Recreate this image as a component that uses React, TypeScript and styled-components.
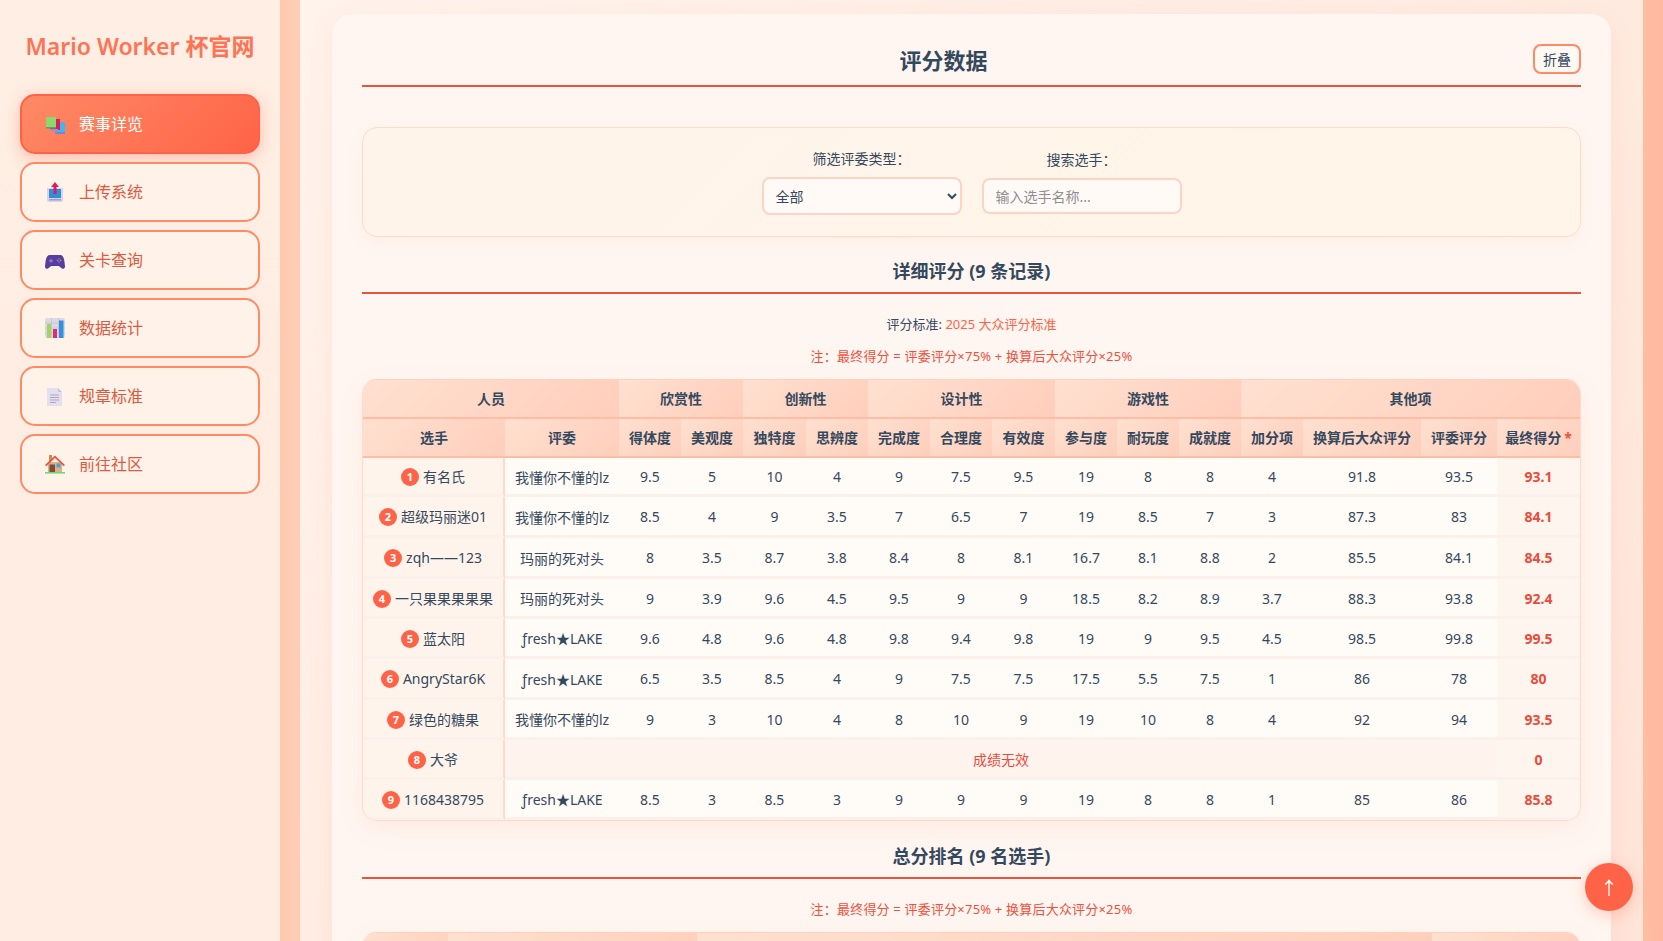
import React from "react";
import styled, { createGlobalStyle } from "styled-components";

const FONT = `"Noto Sans", "Noto Sans CJK SC", sans-serif`;

const Global = createGlobalStyle`
  html, body { margin: 0; padding: 0; height: 100%; overflow: hidden; }
  body { font-family: ${FONT}; color: #34495e; }
  * { box-sizing: border-box; }
`;

const Page = styled.div`
  display: flex;
  height: 100vh;
  overflow: hidden;
  background: #fff0e8;
`;
const Sidebar = styled.aside`
  flex: 0 0 280px;
  padding: 30px 20px 0;
  background: linear-gradient(180deg, #ffeee3 0%, #ffece2 100%);
`;
const Strip = styled.div<{ $tone: string }>`
  flex: 0 0 20px;
  background: ${(p) => p.$tone};
`;
const Brand = styled.h1`
  margin: 0 0 32px;
  font-size: 23px;
  line-height: 32px;
  font-weight: 600;
  color: #ff7355;
  text-align: center;
  white-space: nowrap;
`;
const Nav = styled.nav`
  display: flex;
  flex-direction: column;
  gap: 8px;
`;
const NavItem = styled.a<{ $active?: boolean }>`
  display: flex;
  align-items: center;
  gap: 14px;
  height: 60px;
  padding-left: 23px;
  border-radius: 15px;
  border: 2px solid ${(p) => (p.$active ? "#ff6347" : "#ff8a65")};
  font-size: 16px;
  color: ${(p) => (p.$active ? "#ffffff" : "#dc5a40")};
  background: ${(p) => (p.$active ? "linear-gradient(135deg, #ff8a65, #ff6347)" : "#fff2e8")};
  box-shadow: ${(p) => (p.$active ? "0 4px 15px rgba(255, 99, 71, 0.35)" : "none")};
`;
const NavLabel = styled.span`
  padding-bottom: 3px;
`;
const Icon = styled.svg`
  flex: 0 0 20px;
  width: 20px;
  height: 20px;
`;
const Main = styled.main`
  flex: 1;
  min-width: 0;
  padding: 14px 32px 0;
  overflow: hidden;
  background: linear-gradient(135deg, #fff3ec 0%, #ffe4d8 100%);
`;
const Card = styled.section`
  padding: 30px 30px 60px;
  border-radius: 20px;
  background: #fff6f1;
  box-shadow: 0 6px 24px rgba(255, 138, 101, 0.12);
`;
const TitleRow = styled.header`
  display: flex;
  align-items: flex-start;
  gap: 8px;
  padding-bottom: 9px;
  border-bottom: 2px solid #e8553f;
`;
const Title = styled.h2`
  flex: 1;
  margin: 0;
  font-size: 22px;
  line-height: 32px;
  font-weight: 700;
  color: #34495e;
  text-align: center;
`;
const Collapse = styled.button`
  width: 48px;
  height: 30px;
  padding: 0;
  border: 2px solid #ff8a65;
  border-radius: 8px;
  background: #fff8f3;
  color: #34495e;
  font: 14px ${FONT};
`;
const FilterPanel = styled.div`
  display: flex;
  justify-content: center;
  align-items: center;
  gap: 20px;
  margin-top: 40px;
  height: 110px;
  border: 1px solid #ffd9c9;
  border-radius: 15px;
  background: linear-gradient(135deg, #fff4ea, #fff5e8);
  box-shadow: 0 6px 16px rgba(255, 138, 101, 0.07);
`;
const Field = styled.label`
  display: flex;
  flex-direction: column;
  align-items: center;
  gap: 8px;
  font-size: 14px;
  line-height: 20px;
  color: #34495e;
`;
const Select = styled.select`
  width: 200px;
  height: 38px;
  padding: 0 8px;
  border: 2px solid #ffd3c4;
  border-radius: 8px;
  background: #fffaf6;
  color: #34495e;
  font: 14px ${FONT};
`;
const Input = styled.input`
  width: 200px;
  height: 36px;
  padding: 0 12px;
  border: 2px solid #ffd3c4;
  border-radius: 8px;
  background: #fffaf6;
  color: #34495e;
  font: 14px ${FONT};
  &::placeholder { color: #8d8f92; opacity: 1; }
`;
const SectionHead = styled.h3<{ $top: number }>`
  margin: ${(p) => p.$top}px 0 0;
  padding-bottom: 7px;
  border-bottom: 2px solid #e8553f;
  font-size: 18px;
  line-height: 28px;
  font-weight: 700;
  color: #34495e;
  text-align: center;
`;
const Meta = styled.p<{ $top: number; $red?: boolean }>`
  margin: ${(p) => p.$top}px 0 0;
  font-size: 13px;
  line-height: 20px;
  letter-spacing: ${(p) => (p.$red ? "0.2px" : "0")};
  text-align: center;
  color: ${(p) => (p.$red ? "#f0503c" : "#34495e")};
`;
const Accent = styled.span`
  color: #ff6347;
`;
const TableWrap = styled.div`
  margin-top: 13px;
  border: 1px solid #ffd9c9;
  border-top-color: #ffd0bd;
  border-radius: 15px;
  overflow: hidden;
  box-shadow: 0 8px 25px rgba(255, 138, 101, 0.1);
`;
const Table = styled.table`
  width: 1217px;
  table-layout: fixed;
  border-collapse: separate;
  border-spacing: 0;
  font-size: 14px;
`;
const Col = styled.col<{ $w: number }>`
  width: ${(p) => p.$w}px;
`;
const Th = styled.th`
  height: 39px;
  padding: 0 0 2px;
  border-bottom: 2px solid #ffbda6;
  background: linear-gradient(135deg, #ffe0d0, #ffcebc);
  color: #34495e;
  font-size: 14px;
  font-weight: 700;
  text-align: center;
  white-space: nowrap;
`;
const Star = styled.span`
  color: #f0503c;
  margin-left: 3px;
`;
const Row = styled.tr<{ $h: number }>`
  height: ${(p) => p.$h}px;
`;
const Td = styled.td`
  padding: 1px 0 0;
  border-bottom: 3px solid #fbf1ea;
  background: #fffbf7;
  color: #34495e;
  text-align: center;
  white-space: nowrap;
`;
const NameTd = styled(Td)`
  background: #fff4ec;
  border-right: 2px solid #ffd9c9;
`;
const NameInner = styled.span`
  display: inline-flex;
  align-items: center;
  gap: 4px;
  line-height: 20px;
`;
const VoidTd = styled(Td)`
  background: #fff3ee;
  color: #e74c3c;
`;
const ScoreTd = styled(Td)`
  background: #fff5ef;
  color: #e74c3c;
  font-weight: 700;
`;
const Rank = styled.span`
  display: inline-flex;
  align-items: center;
  justify-content: center;
  flex: 0 0 18px;
  width: 18px;
  height: 18px;
  border-radius: 50%;
  background: #ff6347;
  color: #ffffff;
  font-size: 11px;
  font-weight: 700;
`;
const TopButton = styled.button`
  position: fixed;
  right: 30px;
  bottom: 30px;
  width: 48px;
  height: 48px;
  padding: 0;
  border: none;
  border-radius: 50%;
  background: #ff6347;
  color: #ffffff;
  font: 18px ${FONT};
  box-shadow: 0 4px 15px rgba(255, 99, 71, 0.3);
`;

const Books = () => (
  <Icon viewBox="0 0 20 20">
    <rect x="10" y="8" width="10" height="10" fill="#42b4f0" />
    <rect x="10" y="18" width="10" height="2" fill="#7b86c8" />
    <rect x="5" y="5" width="10" height="11" fill="#d81f5c" />
    <rect x="5" y="15" width="8" height="2" fill="#a78bc4" />
    <rect x="1" y="3" width="10" height="11" fill="#8cd86a" />
    <rect x="1" y="13" width="10" height="1.500" fill="#5f9e6a" />
  </Icon>
);
const Upload = () => (
  <Icon viewBox="0 0 20 20">
    <path d="M2 6h16v12a2 2 0 0 1-2 2H4a2 2 0 0 1-2-2z" fill="#d9d2ea" />
    <rect x="4" y="7" width="12" height="9" fill="#2f8fdc" />
    <path d="M10 0l4 5h-2.500v7h-3V5H6z" fill="#d81f5c" />
    <rect x="4" y="17" width="12" height="1.500" fill="#a89fc4" />
  </Icon>
);
const Pad = () => (
  <Icon viewBox="0 0 20 20">
    <path d="M5 5h10c2.500 0 3.600 2 4.200 5l.8 6c.2 2-1.400 3.400-3 2.600L13.800 16H6.200L3 18.600C1.400 19.400-.2 18 0 16l.8-6C1.400 7 2.500 5 5 5z" fill="#5a3c9c" />
    <path d="M4 10h4v1.400H4zM5.300 8.700h1.400v4H5.300z" fill="#8a78cc" />
    <circle cx="14" cy="8.800" r=".9" fill="#e8553f" />
    <circle cx="15.600" cy="10.300" r=".9" fill="#4cc3a0" />
    <circle cx="12.500" cy="10.300" r=".9" fill="#42a5f0" />
    <circle cx="14" cy="11.800" r=".9" fill="#8a78cc" />
  </Icon>
);
const Chart = () => (
  <Icon viewBox="0 0 20 20">
    <rect x="0" y="0" width="20" height="20" rx="2" fill="#dcd8e4" />
    <path d="M0 5h20M0 10h20M0 15h20M6.500 0v20M13.500 0v20" stroke="#c8c2d2" strokeWidth=".8" />
    <rect x="2" y="6" width="4" height="14" fill="#9bd85c" />
    <rect x="8" y="11" width="4" height="9" fill="#e62a6c" />
    <rect x="14" y="2.500" width="4.500" height="17.500" fill="#2f8fe0" />
  </Icon>
);
const Doc = () => (
  <Icon viewBox="0 0 20 20">
    <path d="M2 2h11l4 4v14H2z" fill="#e4dff0" />
    <path d="M13 2l4 4h-4z" fill="#c8c2d8" />
    <path d="M5 9h9M5 11.500h9M5 14h9M5 16.500h6" stroke="#b0a9bc" strokeWidth="1" />
  </Icon>
);
const Home = () => (
  <Icon viewBox="0 0 20 20">
    <rect x="4" y="1" width="3" height="6" fill="#c98a5e" />
    <rect x="3" y="8" width="14" height="10" fill="#e0b083" />
    <path d="M10 1.500L0 11l1.300 1.300L10 4l8.700 8.300L20 11z" fill="#e8553f" />
    <rect x="4.500" y="10.500" width="5.500" height="7.500" fill="#7a4f3e" />
    <rect x="11.500" y="9.500" width="4" height="4" fill="#42a5e6" />
    <rect x="0" y="18" width="20" height="1.600" fill="#6fd87c" />
  </Icon>
);

const NAV: { label: string; icon: React.ReactNode; active?: boolean }[] = [
  { label: "赛事详览", icon: <Books />, active: true },
  { label: "上传系统", icon: <Upload /> },
  { label: "关卡查询", icon: <Pad /> },
  { label: "数据统计", icon: <Chart /> },
  { label: "规章标准", icon: <Doc /> },
  { label: "前往社区", icon: <Home /> },
];

const WIDTHS = [142, 114, 62, 62, 63, 62, 62, 62, 63, 62, 62, 62, 62, 118, 76, 83];
const GROUPS: [string, number][] = [
  ["人员", 2], ["欣赏性", 2], ["创新性", 2], ["设计性", 3], ["游戏性", 3], ["其他项", 4],
];
const HEADS = ["选手", "评委", "得体度", "美观度", "独特度", "思辨度", "完成度", "合理度", "有效度", "参与度", "耐玩度", "成就度", "加分项", "换算后大众评分", "评委评分"];

const LZ = "我懂你不懂的lz";
const DEAD = "玛丽的死对头";
const FRESH = "ƒresh★LAKE";
type Rec = { name: string; judge?: string; cells?: string[]; score: string; h: number };
const ROWS: Rec[] = [
  { name: "有名氏", judge: LZ, cells: "9.5 5 10 4 9 7.5 9.5 19 8 8 4 91.8 93.5".split(" "), score: "93.1", h: 39 },
  { name: "超级玛丽迷01", judge: LZ, cells: "8.5 4 9 3.5 7 6.5 7 19 8.5 7 3 87.3 83".split(" "), score: "84.1", h: 41 },
  { name: "zqh——123", judge: DEAD, cells: "8 3.5 8.7 3.8 8.4 8 8.1 16.7 8.1 8.8 2 85.5 84.1".split(" "), score: "84.5", h: 41 },
  { name: "一只果果果果果", judge: DEAD, cells: "9 3.9 9.6 4.5 9.5 9 9 18.5 8.2 8.9 3.7 88.3 93.8".split(" "), score: "92.4", h: 40 },
  { name: "蓝太阳", judge: FRESH, cells: "9.6 4.8 9.6 4.8 9.8 9.4 9.8 19 9 9.5 4.5 98.5 99.8".split(" "), score: "99.5", h: 40 },
  { name: "AngryStar6K", judge: FRESH, cells: "6.5 3.5 8.5 4 9 7.5 7.5 17.5 5.5 7.5 1 86 78".split(" "), score: "80", h: 41 },
  { name: "绿色的糖果", judge: LZ, cells: "9 3 10 4 8 10 9 19 10 8 4 92 94".split(" "), score: "93.5", h: 40 },
  { name: "大爷", score: "0", h: 40 },
  { name: "1168438795", judge: FRESH, cells: "8.5 3 8.5 3 9 9 9 19 8 8 1 85 86".split(" "), score: "85.8", h: 40 },
];
const RANK_WIDTHS = [85, 249, 735, 148];

export default function App() {
  return (
    <Page>
      <Global />
      <Sidebar>
        <Brand>Mario Worker 杯官网</Brand>
        <Nav>
          {NAV.map((n) => (
            <NavItem key={n.label} $active={n.active}>
              {n.icon}
              <NavLabel>{n.label}</NavLabel>
            </NavItem>
          ))}
        </Nav>
      </Sidebar>
      <Strip $tone="linear-gradient(90deg, #ffc9b0, #ffcdb6)" />
      <Main>
        <Card>
          <TitleRow>
            <Title>评分数据</Title>
            <Collapse>折叠</Collapse>
          </TitleRow>
          <FilterPanel>
            <Field>
              筛选评委类型：
              <Select defaultValue="全部">
                <option>全部</option>
              </Select>
            </Field>
            <Field>
              搜索选手：
              <Input placeholder="输入选手名称..." />
            </Field>
          </FilterPanel>
          <SectionHead $top={20}>详细评分 (9 条记录)</SectionHead>
          <Meta $top={20}>
            评分标准: <Accent>2025 大众评分标准</Accent>
          </Meta>
          <Meta $top={12} $red>注：最终得分 = 评委评分×75% + 换算后大众评分×25%</Meta>
          <TableWrap>
            <Table>
              <colgroup>
                {WIDTHS.map((w, i) => (
                  <Col key={i} $w={w} />
                ))}
              </colgroup>
              <thead>
                <tr>
                  {GROUPS.map(([g, span]) => (
                    <Th key={g} colSpan={span}>{g}</Th>
                  ))}
                </tr>
                <tr>
                  {HEADS.map((h) => (
                    <Th key={h}>{h}</Th>
                  ))}
                  <Th>最终得分<Star>*</Star></Th>
                </tr>
              </thead>
              <tbody>
                {ROWS.map((r, i) => (
                  <Row key={r.name} $h={r.h}>
                    <NameTd>
                      <NameInner><Rank>{i + 1}</Rank>{r.name}</NameInner>
                    </NameTd>
                    {r.cells ? (
                      <>
                        <Td>{r.judge}</Td>
                        {r.cells.map((c, j) => (
                          <Td key={j}>{c}</Td>
                        ))}
                      </>
                    ) : (
                      <VoidTd colSpan={14}>成绩无效</VoidTd>
                    )}
                    <ScoreTd>{r.score}</ScoreTd>
                  </Row>
                ))}
              </tbody>
            </Table>
          </TableWrap>
          <SectionHead $top={21}>总分排名 (9 名选手)</SectionHead>
          <Meta $top={20} $red>注：最终得分 = 评委评分×75% + 换算后大众评分×25%</Meta>
          <TableWrap>
            <Table>
              <colgroup>
                {RANK_WIDTHS.map((w, i) => (
                  <Col key={i} $w={w} />
                ))}
              </colgroup>
              <thead>
                <tr>
                  {RANK_WIDTHS.map((_, i) => (
                    <Th key={i} />
                  ))}
                </tr>
              </thead>
            </Table>
          </TableWrap>
        </Card>
      </Main>
      <Strip $tone="linear-gradient(90deg, #ffbda2, #ffb99f)" />
      <TopButton>↑</TopButton>
    </Page>
  );
}
